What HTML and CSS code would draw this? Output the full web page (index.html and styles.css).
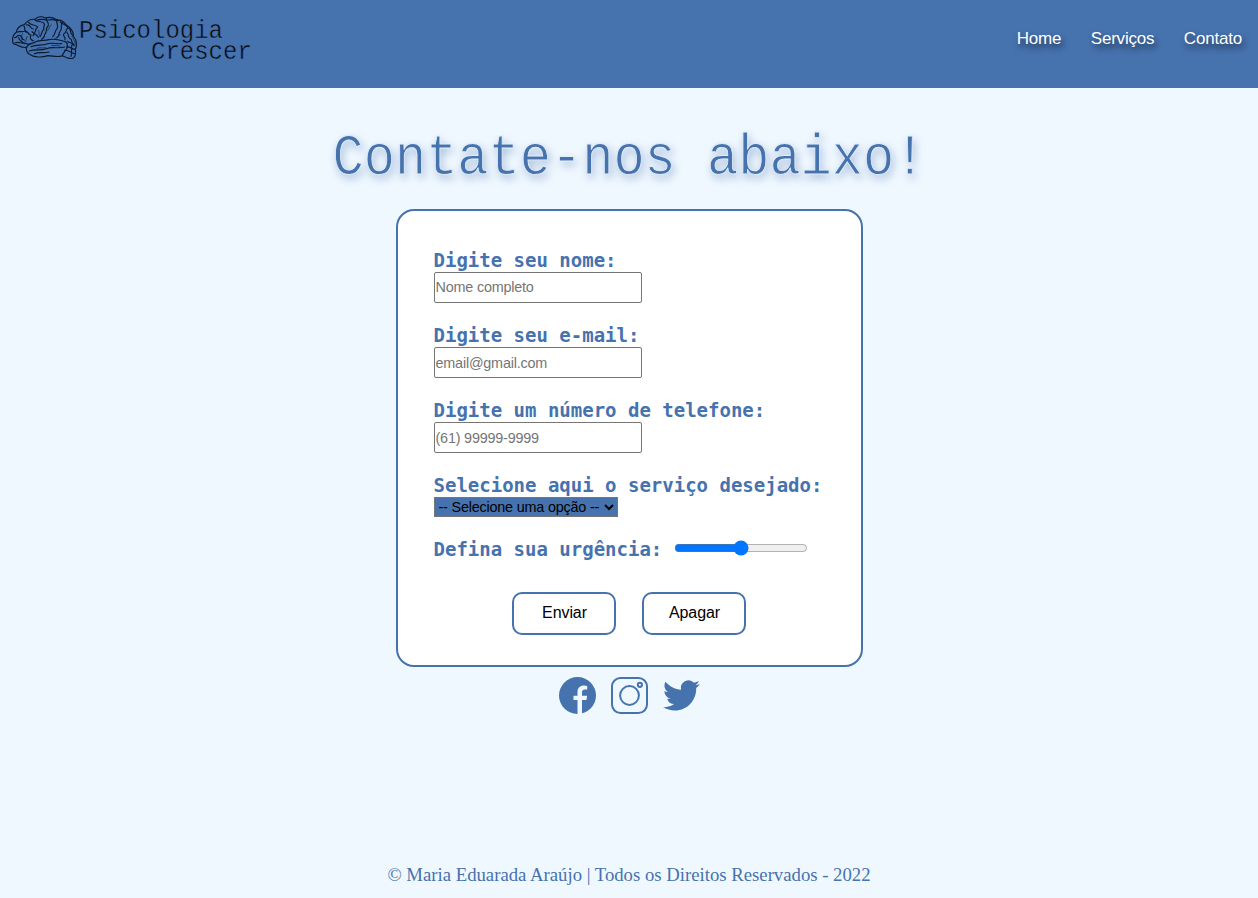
FILE: index.html
```html
<!DOCTYPE html>
<html lang="pt-BR">
<head>
<meta charset="utf-8">
<title>Psicologia Crescer - Contato</title>
<link rel="stylesheet" href="styles.css">
</head>
<body>
<header class="topbar">
  <div class="logo">
    <svg class="brain" viewBox="0 0 198 132" width="66" height="44">
      <g fill="none" stroke="#0b1a30" stroke-width="3.5" stroke-linecap="round" stroke-linejoin="round">
        <path d="M4 83C-2 68 4 55 13 49C15 36 26 28 37 26C45 15 58 9 69 10C77 1 91 0 99 6C112 2 125 5 133 11C148 12 158 20 163 27C177 35 185 49 184 60C194 72 195 88 190 100C192 114 190 123 183 127C172 130 161 124 151 119C137 125 122 119 108 119C90 125 66 125 51 114C43 108 42 98 44 94C34 96 22 91 15 87Z"/>
        <path d="M44 94C47 84 57 83 66 80C80 70 96 75 110 71C127 68 141 71 153 75C166 76 169 87 164 98C159 107 153 111 151 119"/>
        <path d="M52 105C69 98 87 105 103 98C120 91 138 99 158 93M57 92C73 83 90 91 104 84C119 78 135 85 149 83M67 113C79 107 96 112 111 108"/>
        <path d="M10 80C19 76 27 83 35 81C44 80 46 88 54 84M8 65C16 65 15 56 23 58C31 59 27 72 37 72M16 48C26 44 29 50 38 46C48 42 47 58 57 57C52 66 57 72 64 74M20 65C21 75 31 77 37 83"/>
        <path d="M36 31C42 38 34 42 43 49M50 19C56 29 69 25 77 33C67 40 73 50 63 59M43 27C56 23 53 38 64 39M69 12C76 19 88 14 96 22C102 28 91 32 96 40C87 46 91 55 84 62"/>
        <path d="M60 47C66 55 75 54 79 64M103 7C101 18 115 20 108 31C99 37 108 46 98 55C100 63 92 66 89 70M76 12C89 6 101 15 117 11C127 9 131 15 139 14"/>
        <path d="M135 14C131 25 143 28 134 40C126 48 132 53 122 62M151 20C142 30 155 35 144 47C137 53 146 58 135 65"/>
        <path d="M145 18C154 28 166 24 168 37C158 41 166 50 155 54C151 61 162 63 159 71M171 37C179 43 173 53 182 58M165 50C173 56 165 65 176 69C182 75 178 83 185 88"/>
        <path d="M166 76C174 83 183 77 187 88M164 93C173 91 178 98 189 100M158 103C169 101 175 109 187 113M181 83C175 96 182 107 177 121"/>
        <path stroke-width="2" d="M31 53C25 60 34 67 29 73M46 61C40 66 46 74 39 78M79 43C84 47 78 54 83 59M118 27C109 32 114 38 107 43M145 56C134 60 140 65 129 67M75 97C83 93 94 98 101 95M119 88C129 91 138 86 144 91M180 61C187 69 187 79 190 84"/>
      </g>
    </svg>
    <div class="brand"><span>Psicologia</span><span class="brand-end">Crescer</span></div>
  </div>
  <nav class="nav"><a>Home</a><a>Serviços</a><a>Contato</a></nav>
</header>
<main>
  <h1>Contate-nos abaixo!</h1>
  <form class="card">
    <label for="nome">Digite seu nome:</label>
    <input class="field field-name" id="nome" type="text" placeholder="Nome completo">
    <label for="email">Digite seu e-mail:</label>
    <input class="field" id="email" type="email" placeholder="email@gmail.com">
    <label for="tel">Digite um número de telefone:</label>
    <input class="field" id="tel" type="tel" placeholder="(61) 99999-9999">
    <label for="servico">Selecione aqui o serviço desejado:</label>
    <select id="servico"><option>-- Selecione uma opção --</option></select>
    <div class="urgency"><label for="urg">Defina sua urgência:</label><input id="urg" type="range"></div>
    <div class="buttons"><button type="button">Enviar</button><button type="button">Apagar</button></div>
  </form>
  <div class="social">
    <svg viewBox="0 0 37 37" width="37" height="37"><circle cx="18.5" cy="18.5" r="18.5" fill="#4672ae"/><path d="M18.500 37V23h-4v-4.200h4v-3.300c0-4.700 2.500-6.900 6.600-6.900l3.100.3v3.700h-2.200c-2.100 0-3 1-3 2.900v3.300h5.100L27.500 23H23v14z" fill="#f0f8ff"/></svg>
    <svg viewBox="0 0 37 37" width="37" height="37"><g fill="none" stroke="#4672ae" stroke-width="2"><rect x="1" y="1" width="35" height="35" rx="8.500"/><circle cx="18.500" cy="18.500" r="9.400"/><circle cx="28.900" cy="7.800" r="2.100"/></g></svg>
    <svg viewBox="0 0 24 24" width="37" height="37"><path fill="#4672ae" d="M23.950 4.570a10 10 0 0 1-2.820.77 4.960 4.960 0 0 0 2.160-2.720c-.95.550-2 .95-3.130 1.180a4.920 4.920 0 0 0-8.380 4.480C7.690 8.090 4.070 6.130 1.640 3.160a4.920 4.920 0 0 0 1.520 6.570 4.900 4.900 0 0 1-2.230-.61v.06a4.920 4.920 0 0 0 3.950 4.830 5 5 0 0 1-2.210.08 4.940 4.940 0 0 0 4.600 3.420A9.870 9.870 0 0 1 0 19.540a14 14 0 0 0 7.550 2.210c9.050 0 14-7.500 14-13.990 0-.21 0-.42-.02-.63a9.940 9.940 0 0 0 2.420-2.560z"/></svg>
  </div>
</main>
<footer>© Maria Eduarada Araújo | Todos os Direitos Reservados - 2022</footer>
</body>
</html>
```
FILE: styles.css
```css
* { box-sizing: border-box; }
body {
  margin: 0;
  height: 898px;
  display: flex;
  flex-direction: column;
  background: #f0f8ff;
  color: #4672ae;
  font-family: "Liberation Sans", Arial, sans-serif;
  overflow: hidden;
}
.topbar {
  height: 88px;
  flex: none;
  display: flex;
  justify-content: space-between;
  align-items: flex-start;
  padding: 16px 16px 0 12px;
  background: #4672ae;
}
.logo { display: flex; align-items: flex-start; }
.brain { margin-right: 1px; }
.brand {
  display: flex;
  flex-direction: column;
  padding-top: 5px;
  font: 24px/20px "Liberation Mono", monospace;
  color: #05090f;
  -webkit-text-stroke: 0.5px #4672ae;
  transform: scaleY(1.06);
  transform-origin: 0 0;
}
.brand-end { padding-left: 72px; }
.nav {
  display: flex;
  gap: 29.500px;
  padding-top: 13px;
  font-size: 17px;
  line-height: 20px;
  letter-spacing: -0.2px;
  color: #fff;
  text-shadow: 2px 4px 6px rgba(0, 0, 0, 0.6);
}
main {
  flex: 1;
  display: flex;
  flex-direction: column;
  align-items: center;
}
h1 {
  margin: 41px 0 20px;
  font: 400 52px/60px "Liberation Mono", monospace;
  text-shadow: 2px 4px 8px rgba(70, 114, 174, 0.5);
  -webkit-text-stroke: 0.8px #e3edf8;
  transform: scaleY(1.12);
}
.card {
  width: 467px;
  height: 458px;
  flex: none;
  display: flex;
  flex-direction: column;
  align-items: flex-start;
  padding: 38px 36px 0;
  border: 2px solid #4672ae;
  border-radius: 18px;
  background: #fff;
}
label {
  padding-bottom: 1px;
  font: 700 19px/22px "DejaVu Sans Mono", monospace;
  white-space: nowrap;
}
.field {
  width: 208px;
  height: 31px;
  margin: 0 0 21px;
  padding: 1px;
  border: 1px solid #767676;
  border-radius: 2px;
  font: 14.400px "Liberation Sans", sans-serif;
  letter-spacing: -0.2px;
}
.field-name { padding-bottom: 3px; }
select {
  width: 184px;
  height: 20px;
  border: 1px solid #767676;
  border-radius: 0;
  background: #4672ae;
  color: #000;
  font: 14.400px "Liberation Sans", sans-serif;
  letter-spacing: -0.2px;
}
.urgency {
  display: flex;
  align-items: center;
  margin-top: 21px;
}
#urg { width: 134px; height: 16px; margin: 0 0 3px 12px; }
.buttons {
  align-self: center;
  display: flex;
  gap: 26px;
  margin-top: 31px;
}
button {
  width: 104px;
  height: 43px;
  padding: 0 0 1px 1px;
  border: 2px solid #4672ae;
  border-radius: 10px;
  background: #fff;
  color: #000;
  font: 16px "Liberation Sans", sans-serif;
  letter-spacing: -0.1px;
}
.social { display: flex; gap: 15px; margin-top: 10px; }
footer {
  padding-bottom: 12px;
  text-align: center;
  font: 18.730px/22px "Liberation Serif", serif;
}
```
